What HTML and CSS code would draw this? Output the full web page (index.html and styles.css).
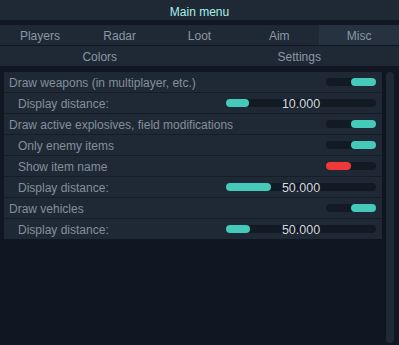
FILE: index.html
```html
<!DOCTYPE html>
<html>
<head>
<meta charset="utf-8">
<link rel="stylesheet" href="styles.css">
</head>
<body>
<div class="title">Main menu</div>
<div class="tabs five">
  <div class="tab">Players</div>
  <div class="tab">Radar</div>
  <div class="tab">Loot</div>
  <div class="tab">Aim</div>
  <div class="tab active">Misc</div>
</div>
<div class="tabs two">
  <div class="tab">Colors</div>
  <div class="tab">Settings</div>
</div>
<div class="main">
  <div class="panel">
    <div class="row"><span class="label">Draw weapons (in multiplayer, etc.)</span><div class="toggle on"><i></i></div></div>
    <div class="row sub"><span class="label">Display distance:</span><div class="slider"><i style="width:23px"></i><span>10.000</span></div></div>
    <div class="row"><span class="label">Draw active explosives, field modifications</span><div class="toggle on"><i></i></div></div>
    <div class="row sub"><span class="label">Only enemy items</span><div class="toggle on"><i></i></div></div>
    <div class="row sub"><span class="label">Show item name</span><div class="toggle off"><i></i></div></div>
    <div class="row sub"><span class="label">Display distance:</span><div class="slider"><i style="width:45px"></i><span>50.000</span></div></div>
    <div class="row"><span class="label">Draw vehicles</span><div class="toggle on"><i></i></div></div>
    <div class="row sub"><span class="label">Display distance:</span><div class="slider"><i style="width:24px"></i><span>50.000</span></div></div>
  </div>
  <div class="scrollbar"></div>
</div>
</body>
</html>
```
FILE: styles.css
```css
html, body {
  margin: 0;
  padding: 0;
  background: #111722;
  height: 100%;
  overflow: hidden;
}
body {
  font-family: "Liberation Sans", Arial, sans-serif;
  font-size: 12px;
  width: 399px;
  height: 345px;
}
.title {
  height: 20px;
  line-height: 24px;
  background: #1f2935;
  color: #a8f0ec;
  text-align: center;
  margin-bottom: 5px;
  overflow: hidden;
}
.tabs {
  display: grid;
  background: #1f2935;
  height: 20px;
}
.tabs.five {
  grid-template-columns: repeat(5, 1fr);
  margin-bottom: 1px;
}
.tabs.two {
  grid-template-columns: 1fr 1fr;
  margin-bottom: 6px;
}
.tab {
  color: #8a97a5;
  text-align: center;
  line-height: 22px;
  height: 20px;
  overflow: hidden;
}
.tab.active {
  background: #263240;
}
.main {
  display: flex;
  align-items: flex-start;
  padding-left: 4px;
}
.panel {
  width: 378px;
  display: flex;
  flex-direction: column;
  gap: 1px;
  background: #161d28;
}
.row {
  height: 20px;
  background: #1f2935;
  display: flex;
  align-items: center;
  justify-content: space-between;
  padding: 0 6px 0 5px;
  color: #838f9c;
}
.row .label {
  line-height: 20px;
  padding-top: 1px;
}
.row.sub .label {
  padding-left: 9px;
}
.toggle {
  width: 50px;
  height: 8px;
  border-radius: 4px;
  background: #121a24;
  display: flex;
}
.toggle i {
  display: block;
  width: 25px;
  height: 8px;
  border-radius: 4px;
}
.toggle.on { justify-content: flex-end; }
.toggle.on i { background: #45c9b9; }
.toggle.off i { background: #ef3939; }
.slider {
  position: relative;
  width: 150px;
  height: 8px;
  border-radius: 4px;
  background: #121a24;
}
.slider i {
  display: block;
  height: 8px;
  border-radius: 4px;
  background: #45c9b9;
}
.slider span {
  position: absolute;
  left: 0;
  right: 0;
  top: -4px;
  text-align: center;
  color: #d2d8de;
  font-size: 12.5px;
  line-height: 18px;
}
.scrollbar {
  margin-left: 4px;
  width: 8px;
  height: 271px;
  border-radius: 4px;
  background: #1f2935;
}
```
